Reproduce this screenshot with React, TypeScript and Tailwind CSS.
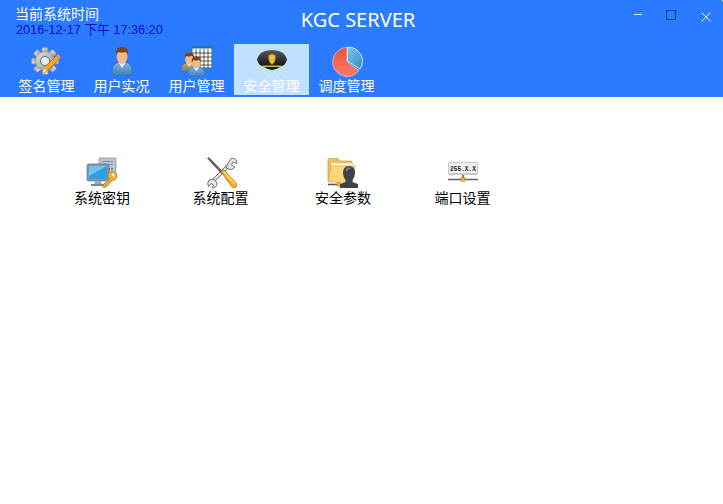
import React from "react";

const CJK = "font-['Noto_Sans_CJK_SC','Noto_Sans',sans-serif]";

function Gear() {
  const teeth = [0, 45, 90, 135, 180, 225, 270, 315];
  return (
    <svg width="32" height="32" viewBox="0 0 32 32">
      <defs>
        <linearGradient id="g1" x1="0" y1="0" x2="1" y2="1">
          <stop offset="0" stopColor="#e6e6e6" />
          <stop offset="1" stopColor="#8d8d8d" />
        </linearGradient>
      </defs>
      <g transform="translate(14 15)">
        {teeth.map((a) => (
          <rect key={a} x="-3" y="-13.5" width="6" height="7" rx="1" fill="url(#g1)" stroke="#8a8a8a" strokeWidth="0.6" transform={`rotate(${a})`} />
        ))}
        <circle r="9.5" fill="url(#g1)" stroke="#8a8a8a" strokeWidth="0.6" />
        <circle r="4.6" fill="#c5ced9" stroke="#777" strokeWidth="1" />
        <circle r="3.6" fill="#e4ebf3" />
      </g>
      <path d="M27 8 L30 11 L16 25 L11.5 27 L13 22 Z" fill="#f5a81c" stroke="#b56d0a" strokeWidth="0.7" />
      <path d="M27 8 L30 11 L28.3 12.7 L25.3 9.7 Z" fill="#e58ab4" stroke="#a8587e" strokeWidth="0.5" />
      <path d="M13 22 L16 25 L11.5 27 Z" fill="#f6dfb8" />
    </svg>
  );
}

function Person({ x = 0, y = 0, sx = 1, sy = 1, body = "#7db4e0", id }: { x?: number; y?: number; sx?: number; sy?: number; body?: string; id: string }) {
  return (
    <g transform={`translate(${x} ${y}) scale(${sx} ${sy})`}>
      <defs>
        <linearGradient id={id} x1="0" y1="0" x2="0" y2="1">
          <stop offset="0" stopColor={body} />
          <stop offset="1" stopColor="#3f80c0" />
        </linearGradient>
      </defs>
      <path d="M0.5 28 Q0 20 6 18 L10.5 16.5 L21.5 16.5 L26 18 Q32 20 31.5 28 Q31 30 28 30 H4 Q1 30 0.5 28 Z" fill={`url(#${id})`} stroke="#2f6a9c" strokeWidth="0.7" />
      <path d="M10.5 16.5 L16 22.5 L21.5 16.5 Z" fill="#f4f8fc" />
      <ellipse cx="16" cy="9.5" rx="8.4" ry="9" fill="#f0b98c" />
      <path d="M7.3 11 Q5 0.5 16 0.5 Q27 0.5 24.7 11 Q24 6.5 21 6 Q14 7.5 11 6 Q8.5 6.5 7.3 11 Z" fill="#7a4414" />
    </g>
  );
}

function UserReal() {
  return (
    <svg width="32" height="32" viewBox="0 0 32 32">
      <Person id="p1" x={5.5} y={0} sx={0.66} sy={0.98} />
    </svg>
  );
}

function UserManage() {
  return (
    <svg width="32" height="32" viewBox="0 0 32 32">
      <rect x="11" y="1" width="20" height="21" fill="#fff" stroke="#1c7d8c" strokeWidth="1" />
      <path d="M11 1.5 H31" stroke="#1c7d8c" strokeWidth="2" />
      <path d="M15 3V22M19 3V22M23 3V22M27 3V22M11 7H31M11 11H31M11 15H31M11 19H31" stroke="#333" strokeWidth="0.8" />
      <Person id="p2" x={0} y={6} sx={0.52} sy={0.66} body="#f2a622" />
      <Person id="p3" x={7} y={10} sx={0.52} sy={0.68} />
    </svg>
  );
}

function Cap() {
  return (
    <svg width="32" height="32" viewBox="0 0 32 32">
      <defs>
        <linearGradient id="c1" x1="0" y1="0" x2="0" y2="1">
          <stop offset="0" stopColor="#5a5a5e" />
          <stop offset="1" stopColor="#151517" />
        </linearGradient>
      </defs>
      <path d="M1 14 Q3 4 16 4 Q29 4 31 14 Q29 20 25 20 L7 20 Q3 20 1 14 Z" fill="url(#c1)" />
      <path d="M7 19 H25 L24 21 Q16 27 8 21 Z" fill="#1a1a1c" />
      <path d="M6.5 19.5 H25.5 L25 21 H7 Z" fill="#e0b52a" />
      <path d="M16 8 L19.5 9.5 L19 14.5 Q18 17.5 16 18.5 Q14 17.5 13 14.5 L12.5 9.5 Z" fill="#eec22d" stroke="#a67f12" strokeWidth="0.6" />
    </svg>
  );
}

function Pie() {
  return (
    <svg width="32" height="32" viewBox="0 0 32 32">
      <defs>
        <linearGradient id="r1" x1="0" y1="0" x2="0" y2="1">
          <stop offset="0" stopColor="#e8533c" />
          <stop offset="1" stopColor="#ff7a6a" />
        </linearGradient>
        <linearGradient id="b1" x1="0" y1="0" x2="1" y2="1">
          <stop offset="0" stopColor="#7cc4e8" />
          <stop offset="1" stopColor="#2f8fc8" />
        </linearGradient>
      </defs>
      <path d="M16 16 L16 1.5 A14.5 14.5 0 1 0 28 24.5 Z" fill="url(#r1)" stroke="#c9c9c9" strokeWidth="0.8" />
      <path d="M16.5 15 L16.5 1.2 A14 14 0 0 1 29 23 Z" fill="url(#b1)" stroke="#d5eefa" strokeWidth="0.9" />
    </svg>
  );
}

function SysKey() {
  return (
    <svg width="32" height="32" viewBox="0 0 32 32">
      <rect x="13" y="1" width="17" height="21" rx="1" fill="#b9c6d8" stroke="#7d8da3" strokeWidth="0.7" />
      <path d="M16 4.5H27M16 7.5H27" stroke="#8092aa" strokeWidth="1" />
      <rect x="22" y="11" width="2" height="2" fill="#d8483c" />
      <rect x="25" y="11" width="2" height="2" fill="#48b050" />
      <rect x="1" y="7" width="22" height="17" rx="1.5" fill="#8497ad" stroke="#60738a" strokeWidth="0.7" />
      <rect x="3" y="9" width="18" height="13" fill="#2e9fe0" />
      <path d="M3 9H21L3 19Z" fill="#6cc4f0" />
      <path d="M9 24H15L16 27H8Z" fill="#9fadc0" />
      <rect x="5" y="27" width="14" height="2" fill="#75889e" />
      <circle cx="26.5" cy="19" r="4.5" fill="#edb245" stroke="#b07a1c" strokeWidth="0.7" />
      <circle cx="27.2" cy="18" r="1.4" fill="#fff3d2" />
      <path d="M23.5 21.5 L17 28 V30.5 H20 V28.5 H22 L26 23.5" fill="#e5a63a" stroke="#b07a1c" strokeWidth="0.6" />
    </svg>
  );
}

function Tools() {
  return (
    <svg width="32" height="32" viewBox="0 0 32 32">
      <path d="M24 7 L5 26" stroke="#55595d" strokeWidth="3.6" />
      <path d="M24 7 L5 26" stroke="#eceef0" strokeWidth="2.2" />
      <path d="M20 10 L25 1.5 Q31 0.5 31 6.5 L27 5 L25.5 8 L29 10 Q26 14 21 11.5 Z" fill="#e2e4e6" stroke="#54585c" strokeWidth="0.8" />
      <path d="M8 22 L3 23 Q0.5 27 2.5 29.5 L5 26.5 L7.5 28 L6 31 Q11 31 11 26 Z" fill="#e2e4e6" stroke="#54585c" strokeWidth="0.8" />
      <path d="M1.5 1.5 L3 0.5 L17 15 L15.5 16.5 Z" fill="#5a5f64" stroke="#3a3e42" strokeWidth="0.5" />
      <path d="M15 14.5 L17.5 12.5 L30 26 Q31.5 29 29.5 30.5 Q27.5 31.5 25.5 29.5 Z" fill="#f3b31a" stroke="#a87409" strokeWidth="0.8" />
      <path d="M18 15 L29 27" stroke="#fde28a" strokeWidth="1.2" />
    </svg>
  );
}

function FolderUser() {
  return (
    <svg width="32" height="32" viewBox="0 0 32 32">
      <path d="M1 3 Q1 1.5 2.5 1.5 H11 L13 4 H24 Q25 4 25 5 V24 H1 Z" fill="#f0bf5e" stroke="#c89a3c" strokeWidth="0.7" />
      <path d="M4 6 H25 V20 H4 Z" fill="#fdf6e0" stroke="#d8c28a" strokeWidth="0.4" />
      <path d="M1.2 25 L4 9 H28 L25 25 Z" fill="#ffd777" stroke="#d6a64a" strokeWidth="0.7" />
      <path d="M1 27.5 H13" stroke="#55595e" strokeWidth="1.6" />
      <rect x="10" y="25.5" width="3.6" height="3.6" fill="#f1b035" stroke="#a97a1a" strokeWidth="0.4" />
      <path d="M22 9 Q28 9 28 16 Q28 20 25.5 23 V25 L31 27 V31 H13 V27 L18.5 25 V23 Q16 20 16 16 Q16 9 22 9 Z" fill="#3f4347" />
      <path d="M19 11 Q21.5 9.5 24.5 11 Q22 12.5 19 14.5 Z" fill="#6f7478" />
    </svg>
  );
}

function Port() {
  return (
    <svg width="32" height="32" viewBox="0 0 32 32">
      <rect x="1.5" y="5.5" width="29" height="11" rx="0.5" fill="#f2f2f2" stroke="#b9b9b9" strokeWidth="0.8" />
      <text x="16" y="13.5" textAnchor="middle" fontSize="7" fontWeight="700" textLength="26" lengthAdjust="spacingAndGlyphs" fontFamily="'Liberation Mono',monospace" fill="#222">255.X.X</text>
      <rect x="2" y="16.5" width="28" height="1.5" fill="#c9c9c9" />
      <path d="M16 18 V22 M1 22.5 H31" stroke="#5c6066" strokeWidth="1.6" />
      <rect x="14" y="20.5" width="4" height="4" fill="#f1b035" stroke="#a97a1a" strokeWidth="0.4" />
    </svg>
  );
}

const tabs = [
  { label: "签名管理", icon: <Gear /> },
  { label: "用户实况", icon: <UserReal /> },
  { label: "用户管理", icon: <UserManage /> },
  { label: "安全管理", icon: <Cap />, active: true },
  { label: "调度管理", icon: <Pie /> },
];

const items = [
  { label: "系统密钥", icon: <SysKey />, w: "w-[118px]", text: "" },
  { label: "系统配置", icon: <Tools />, w: "w-[122px]", text: "mr-[3px]" },
  { label: "安全参数", icon: <FolderUser />, w: "w-[120px]", text: "" },
  { label: "端口设置", icon: <Port />, w: "w-[120px]", text: "mr-[1px]" },
];

export default function App() {
  return (
    <div className={`w-[723px] h-[504px] bg-white overflow-hidden ${CJK}`}>
      <header className="h-[97px] bg-[#2a7bff] rounded-tr-[2px] text-white flex flex-col">
        <div className="h-[44px] flex relative">
          <div className="pl-[15px] pt-[5px] w-[240px]">
            <div className="text-[14px] leading-[16px] mb-[1px]">当前系统时间</div>
            <div className="text-[12.7px] leading-[16px] pl-[1px] text-[#0a0ad2] font-['Liberation_Sans','Noto_Sans_CJK_SC',sans-serif] whitespace-nowrap">2016-12-17 下午 17:36:20</div>
          </div>
          <div className="w-[236px] text-center text-[20px] leading-[24px] pt-[8px] font-['Noto_Sans',sans-serif] whitespace-nowrap">KGC SERVER</div>
          <div className="ml-auto flex items-start">
            <button className="w-[30px] h-[28px] flex items-center justify-center" aria-label="minimize">
              <svg width="10" height="10" viewBox="0 0 10 10"><path d="M1 5.5H9" stroke="#eaf2ff" strokeWidth="1" /></svg>
            </button>
            <button className="w-[36px] h-[30px] flex items-center justify-center" aria-label="maximize">
              <svg width="10" height="10" viewBox="0 0 10 10"><rect x="0.5" y="0.5" width="9" height="9" fill="none" stroke="#123f8a" strokeWidth="1" /></svg>
            </button>
            <button className="w-[34px] h-[34px] flex items-center justify-center" aria-label="close">
              <svg width="10" height="10" viewBox="0 0 10 10"><path d="M0.5 0.5L9.5 9.5M9.5 0.5L0.5 9.5" stroke="#f4f8ff" strokeWidth="1" /></svg>
            </button>
          </div>
        </div>
        <nav className="flex pl-[9px]">
          {tabs.map((t) => (
            <div key={t.label} className={`w-[75px] h-[51px] flex flex-col items-center ${t.active ? "bg-[#c2e0ff]" : ""}`}>
              <div className="h-[31px] mt-[2px] shrink-0">{t.icon}</div>
              <div className="text-[14px] leading-[16px] whitespace-nowrap">{t.label}</div>
            </div>
          ))}
        </nav>
      </header>
      <main className="flex pl-[43px] pt-[60px]">
        {items.map((it) => (
          <div key={it.label} className={`${it.w} flex flex-col items-center`}>
            <div className="h-[31px]">{it.icon}</div>
            <div className={`text-[14px] leading-[18px] text-black whitespace-nowrap ${it.text}`}>{it.label}</div>
          </div>
        ))}
      </main>
    </div>
  );
}
